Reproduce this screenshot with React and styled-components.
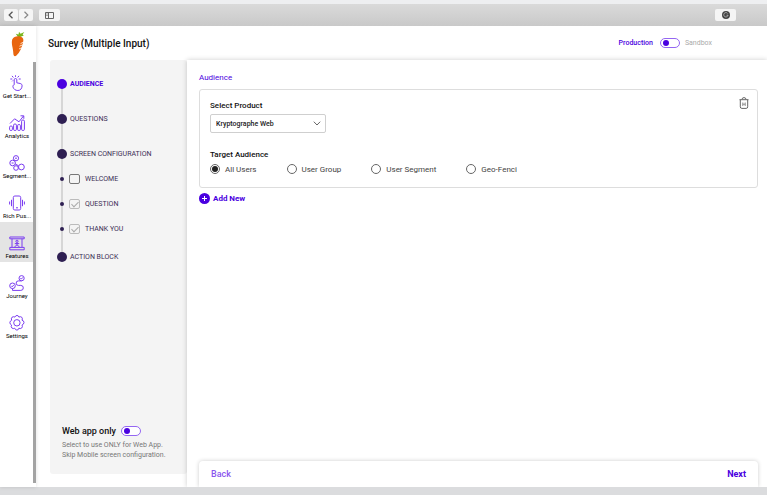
import React, { useState } from "react";
import styled, { createGlobalStyle } from "styled-components";

const steps = [
  { name: "AUDIENCE", active: true },
  { name: "QUESTIONS" },
  {
    name: "SCREEN CONFIGURATION",
    screens: [
      { name: "WELCOME", checked: false },
      { name: "QUESTION", checked: true },
      { name: "THANK YOU", checked: true },
    ],
  },
  { name: "ACTION BLOCK" },
];

const audiences = ["All Users", "User Group", "User Segment", "Geo-Fenci"];

const TapIcon = () => (
  <>
    <path d="M5.200 9.800V4.800a1.300 1.300 0 0 1 2.600 0v3l3.400.7c1.400.3 2 1.200 1.900 2.400-.2 2.700-1.700 4.600-4.200 4.600-2.600 0-4.200-1.400-4.900-3.400-.3-1.200.1-2 1.200-2.300z" />
    <path d="M6.500.3v1.600M3 .900l1.400 1.600M10 .900L8.600 2.500M1.300 4h2M9.700 4h2M3.200 6.300l.9-.9" />
  </>
);

const ChartIcon = () => (
  <>
    <rect x="0.600" y="11" width="2.800" height="4.500" rx="1.200" />
    <rect x="4.600" y="9" width="2.800" height="6.500" rx="1.200" />
    <rect x="8.600" y="9.500" width="2.800" height="6" rx="1.200" />
    <rect x="12.600" y="5" width="2.800" height="10.500" rx="1.200" />
    <path d="M1 8.500l4.600-4.700 4.400 3L14.500 1M11.500.800h3.300v3" />
  </>
);

const SegmentIcon = () => (
  <>
    <circle cx="7" cy="3.200" r="2.600" />
    <circle cx="3.600" cy="8" r="2.800" />
    <circle cx="7" cy="13" r="2.300" />
    <circle cx="12.400" cy="12" r="2.900" />
    <path d="M6 3.200h2M2.600 8h2M6.300 9l3.300 1.800" />
  </>
);

const PhoneIcon = () => (
  <>
    <rect x="4.300" y="1" width="7.400" height="14" rx="1.500" />
    <path d="M7 12.800h2M2.500 4.800v6.400M.6 6.500v3M13.500 4.800v6.400M15.400 6.500v3" />
  </>
);

const FeaturesIcon = () => (
  <>
    <path d="M.8 2h14.400v1.800H.8zM3 3.800v8.400M13 3.800v8.400M.8 12.400h14.400v2.400H.8z" />
    <circle cx="8" cy="6.300" r="1.100" />
    <path d="M8 7.400v2.400M5.400 12L8 9.800l2.600 2.200M5.800 8.600h4.400" />
  </>
);

const JourneyIcon = () => (
  <>
    <circle cx="3.500" cy="10.800" r="2.800" />
    <path d="M2.200 10.800l1 1 1.600-1.900M3.500 13.600v1.800h8.300a2.500 2.500 0 0 0 0-5H9.400a2.200 2.200 0 0 1 0-4.500h3.200" />
    <circle cx="12.600" cy="3.200" r="2.600" />
    <path d="M11.400 3.200l.9.900 1.600-1.700" />
  </>
);

const GearIcon = () => (
  <>
    <path d="M6.600 1Q8-.2 9.400 1l.5 1.100 1.500-.4q1.900.2 2 2.100l-.4 1.400 1.400.7q1.200 1.600 0 3.200l-1.400 1 .4 1.400q-.2 1.900-2.100 2.100l-1.400-.4-.7 1.400q-1.300 1-2.600 0l-.9-1.400-1.400.4q-1.900-.2-2.100-2.100l.4-1.400-1.200-.9q-1.100-1.500 0-3.100l1.300-.9-.4-1.400q.2-1.900 2.100-2.100l1.400.4z" />
    <circle cx="7.900" cy="7.800" r="3.200" />
  </>
);

const menu = [
  { name: "Get Start...", icon: TapIcon },
  { name: "Analytics", icon: ChartIcon },
  { name: "Segment...", icon: SegmentIcon },
  { name: "Rich Pus...", icon: PhoneIcon },
  { name: "Features", icon: FeaturesIcon, active: true },
  { name: "Journey", icon: JourneyIcon },
  { name: "Settings", icon: GearIcon },
];

const Logo = () => (
  <svg width="14" height="26" viewBox="0 0 14 26" role="img" aria-label="Home">
    <path d="M7 6L4.800 2.800l2.700.7L8 .8l1.500 1.900L13.400 1l-1.800 2.500 1.200 1L9 6z" fill="#79b51c" />
    <path d="M1.200 8.500C2.500 5.200 6 5 8 5.300c3.800.4 5.200 2.600 4 6.500C10.800 16.500 9 21.500 5.200 24.800c-2 1-2.900-.4-2.900-2.800 0-4.800-2.300-9-1.100-13.500z" fill="#e8650f" />
    <path d="M12.600 11L9.500 12.700M11.700 13.800L8.500 15.200M10.600 16.800L8 18" stroke="#fff" strokeWidth="0.800" />
  </svg>
);

export default function App() {
  const [audience, setAudience] = useState("All Users");

  return (
    <Window>
      <GlobalStyle />
      <BrowserBar>
        <ButtonGroup>
          <BarButton aria-label="Previous page">
            <svg width="6" height="8" viewBox="0 0 6 8" fill="none" stroke="#555">
              <path d="M4.500.8L1.200 4l3.300 3.200" strokeWidth="1.300" />
            </svg>
          </BarButton>
          <BarButton aria-label="Next page">
            <svg width="6" height="8" viewBox="0 0 6 8" fill="none" stroke="#888">
              <path d="M1.500.8L4.800 4 1.500 7.200" strokeWidth="1.200" />
            </svg>
          </BarButton>
        </ButtonGroup>
        <BarButton $wide aria-label="Show tabs">
          <svg width="9" height="7" viewBox="0 0 9 7" fill="none" stroke="#666">
            <path d="M.5.5h8v6h-8zM3.500.5v6M1.500 2h1M1.500 3.500h1" />
          </svg>
        </BarButton>
        <BarButton $wide $last aria-label="Extension">
          <svg width="8" height="8" viewBox="0 0 8 8">
            <circle cx="4" cy="4" r="4" fill="#444" />
            <path d="M5.800 2.600A2.200 2.200 0 1 0 6.100 4.200H4.500" fill="none" stroke="#bbb" strokeWidth="0.800" />
          </svg>
        </BarButton>
      </BrowserBar>

      <Body>
        <Sidebar>
          <LogoBox>
            <Logo />
          </LogoBox>
          <Menu>
            {menu.map(({ name, icon: Icon, active }) => (
              <MenuLink href="#" key={name} $active={active}>
                <svg width="16" height="16" viewBox="0 0 16 16">
                  <Icon />
                </svg>
                <span>{name}</span>
              </MenuLink>
            ))}
          </Menu>
        </Sidebar>

        <Page>
          <Header>
            <h1>Survey (Multiple Input)</h1>
            <Environment>
              <label htmlFor="environment">Production</label>
              <Toggle id="environment" />
              <span>Sandbox</span>
            </Environment>
          </Header>

          <Columns>
            <StepsPanel>
              <StepList>
                {steps.map((step) => (
                  <li key={step.name}>
                    <Step $active={step.active}>{step.name}</Step>
                    {step.screens && (
                      <ScreenList>
                        {step.screens.map((screen) => (
                          <li key={screen.name}>
                            <Screen>
                              <CheckBox defaultChecked={screen.checked} />
                              {screen.name}
                            </Screen>
                          </li>
                        ))}
                      </ScreenList>
                    )}
                  </li>
                ))}
              </StepList>

              <WebOnly>
                <div>
                  <label htmlFor="webOnly">Web app only</label>
                  <Toggle id="webOnly" />
                </div>
                <p>Select to use ONLY for Web App.</p>
                <p>Skip Mobile screen configuration.</p>
              </WebOnly>
            </StepsPanel>

            <Editor>
              <SectionTitle>Audience</SectionTitle>
              <Card>
                <Fields>
                  <Label htmlFor="product">Select Product</Label>
                  <SelectBox>
                    <select id="product">
                      <option>Kryptographe Web</option>
                    </select>
                    <svg width="8" height="5" viewBox="0 0 8 5" fill="none" stroke="#666">
                      <path d="M.8.7L4 4 7.200.7" />
                    </svg>
                  </SelectBox>
                  <RadioGroup>
                    <legend>Target Audience</legend>
                    <div>
                      {audiences.map((name) => (
                        <RadioLabel key={name}>
                          <Radio
                            name="audience"
                            checked={audience === name}
                            onChange={() => setAudience(name)}
                          />
                          {name}
                        </RadioLabel>
                      ))}
                    </div>
                  </RadioGroup>
                </Fields>
                <IconButton aria-label="Delete">
                  <svg width="10" height="12" viewBox="0 0 10 12" fill="none" stroke="#666">
                    <path d="M.5 2.700h9M3 2.500q0-1.900 2-1.900t2 1.900M1.300 2.800v7q0 1.600 1.600 1.600h4.200q1.600 0 1.600-1.600v-7" />
                    <path d="M3.800 5.500v3.500M6.200 5.500v3.500M3.800 7.200h2.400" strokeWidth="0.700" />
                  </svg>
                </IconButton>
              </Card>
              <AddButton>
                <svg width="11" height="11" viewBox="0 0 11 11">
                  <circle cx="5.500" cy="5.500" r="5.500" fill="#4a00e0" />
                  <path d="M5.500 3v5M3 5.500h5" stroke="#fff" />
                </svg>
                Add New
              </AddButton>

              <Footer>
                <FooterButton>Back</FooterButton>
                <FooterButton $primary>Next</FooterButton>
              </Footer>
            </Editor>
          </Columns>
        </Page>
      </Body>
    </Window>
  );
}

const GlobalStyle = createGlobalStyle`
  * {
    box-sizing: border-box;
  }
  body, h1, h2, p, ol, fieldset {
    margin: 0;
    padding: 0;
  }
  body {
    font-family: Roboto, sans-serif;
    font-size: 8px;
    color: #111111;
  }
  ol {
    list-style: none;
  }
  svg {
    display: block;
    flex: none;
  }
  button, select, input {
    font-family: inherit;
    margin: 0;
  }
  button {
    border: 0;
    padding: 0;
    background: none;
    cursor: pointer;
  }
`;

const Window = styled.div`
  display: flex;
  flex-direction: column;
  min-height: 100vh;
  background: #ffffff;
  border-top: 4px solid #eeeff1;
  border-bottom: 8px solid #dbdcde;
`;

const BrowserBar = styled.div`
  display: flex;
  align-items: center;
  gap: 6px;
  height: 22px;
  padding: 0 31px 0 4px;
  background: linear-gradient(#dadada, #c9c9c9);
`;

const ButtonGroup = styled.div`
  display: flex;
  gap: 1px;
`;

const BarButton = styled.button`
  display: flex;
  align-items: center;
  justify-content: center;
  width: ${(props) => (props.$wide ? "21px" : "14px")};
  height: 12px;
  margin-left: ${(props) => (props.$last ? "auto" : "0")};
  border-radius: 2px;
  background: #f5f5f5;
`;

const Body = styled.div`
  display: flex;
  flex: 1;
`;

const Sidebar = styled.nav`
  display: flex;
  flex-direction: column;
  width: 36px;
  flex: none;
  padding-bottom: 4px;
  box-shadow: 0 0 4px #00000022;
`;

const LogoBox = styled.div`
  display: flex;
  align-items: center;
  justify-content: center;
  height: 36px;
`;

const Menu = styled.div`
  flex: 1;
  border-right: 3px solid #a3a3a3;
`;

const MenuLink = styled.a`
  display: flex;
  flex-direction: column;
  align-items: center;
  justify-content: flex-end;
  height: 40px;
  padding: 0 0 2px 1px;
  background: ${(props) => (props.$active ? "#e4e4e4" : "none")};
  color: #000000;
  font-size: 6px;
  line-height: 9px;
  white-space: nowrap;
  text-decoration: none;

  svg {
    fill: none;
    stroke: #7a3cf0;
    stroke-width: 1;
    stroke-linejoin: round;
  }
`;

const Page = styled.main`
  display: flex;
  flex-direction: column;
  flex: 1;
  min-width: 0;
`;

const Header = styled.header`
  display: flex;
  align-items: center;
  justify-content: space-between;
  height: 34px;
  padding: 0 55px 0 12px;

  h1 {
    font-size: 10px;
    font-weight: 500;
  }
`;

const Environment = styled.div`
  display: flex;
  align-items: center;
  font-size: 7px;

  label {
    color: #4a00e0;
    font-weight: 500;
  }
  input {
    margin: 0 5px 0 7px;
  }
  span {
    color: #aaaaaa;
  }
`;

const Toggle = styled.input.attrs({ type: "checkbox", role: "switch" })`
  appearance: none;
  display: flex;
  align-items: center;
  width: 20px;
  height: 10px;
  padding: 0 2px;
  border: 1px solid #9466f2;
  border-radius: 5px;
  background: #ffffff;
  cursor: pointer;

  &::before {
    content: "";
    width: 6px;
    height: 6px;
    border-radius: 50%;
    background: #4a00e0;
  }
  &:checked {
    justify-content: flex-end;
  }
`;

const Columns = styled.div`
  display: flex;
  flex: 1;
  padding-left: 14px;
`;

const StepsPanel = styled.aside`
  display: flex;
  flex-direction: column;
  justify-content: space-between;
  width: 137px;
  flex: none;
  margin-bottom: 13px;
  padding: 10px 7px 14px;
  border-radius: 3px;
  background: #f4f4f4;
`;

const StepList = styled.ol`
  position: relative;
  display: flex;
  flex-direction: column;
  gap: 7px;
  font-size: 7px;

  /* line that joins the dots */
  &::before {
    content: "";
    position: absolute;
    top: 14px;
    bottom: 14px;
    left: 4px;
    width: 2px;
    background: #d6d6d6;
  }
`;

const Step = styled.div`
  position: relative;
  display: flex;
  align-items: center;
  gap: 3px;
  height: 28px;
  color: ${(props) => (props.$active ? "#4a00e0" : "#3b2e55")};
  font-weight: ${(props) => (props.$active ? 700 : 400)};
  white-space: nowrap;

  &::before {
    content: "";
    width: 10px;
    height: 10px;
    border-radius: 50%;
    background: ${(props) => (props.$active ? "#4a00e0" : "#2e1f52")};
  }
`;

const ScreenList = styled.ol`
  display: grid;
  gap: 10px;
  margin-top: 3px;
`;

const Screen = styled.label`
  position: relative;
  display: flex;
  align-items: center;
  gap: 5px;
  height: 15px;
  padding-left: 3px;
  color: #3b2e55;

  &::before {
    content: "";
    width: 4px;
    height: 4px;
    border-radius: 50%;
    background: #2e1f52;
  }
`;

const CheckBox = styled.input.attrs({ type: "checkbox" })`
  appearance: none;
  display: flex;
  justify-content: center;
  width: 11px;
  height: 10px;
  border: 1px solid #777777;
  border-radius: 2px;

  &:checked {
    border-color: #bbbbbb;
  }
  &:checked::before {
    content: "";
    width: 3px;
    height: 6px;
    border: solid #aaaaaa;
    border-width: 0 1px 1px 0;
    transform: rotate(45deg);
  }
`;

const WebOnly = styled.div`
  padding-left: 5px;
  color: #777777;
  font-size: 7px;
  line-height: 10px;
  white-space: nowrap;

  div {
    display: flex;
    align-items: center;
    gap: 5px;
    margin-bottom: 4px;
  }
  label {
    color: #111111;
    font-size: 9px;
    font-weight: 500;
  }
`;

const Editor = styled.section`
  display: flex;
  flex-direction: column;
  align-items: flex-start;
  flex: 1;
  min-width: 0;
  padding: 11px 9px 0 12px;
  background: #ffffff;
  box-shadow: 0 0 5px #00000033;
  clip-path: inset(-6px 0 0 -6px);
`;

const SectionTitle = styled.h2`
  margin-bottom: 5px;
  color: #4a00e0;
  font-size: 8px;
  font-weight: 400;
  line-height: 13px;
`;

const Card = styled.div`
  display: flex;
  align-items: flex-start;
  justify-content: space-between;
  width: 100%;
  padding: 7px 8px 12px 10px;
  border: 1px solid #dddddd;
  border-radius: 3px;
`;

const Fields = styled.div`
  display: flex;
  flex-direction: column;
  align-items: flex-start;
`;

const Label = styled.label`
  margin: 3px 0;
  font-weight: 500;
  line-height: 11px;
`;

const SelectBox = styled.div`
  display: grid;
  align-items: center;
  width: 116px;
  margin-bottom: 16px;

  select, svg {
    grid-area: 1 / 1;
  }
  select {
    appearance: none;
    width: 100%;
    height: 19px;
    padding: 0 5px;
    border: 1px solid #cfcfcf;
    border-radius: 2px;
    background: #ffffff;
    color: #222222;
    font-size: 7px;
    font-weight: 500;
  }
  svg {
    justify-self: end;
    margin-right: 5px;
    pointer-events: none;
  }
`;

const RadioGroup = styled.fieldset`
  border: 0;

  legend {
    padding: 0;
    font-weight: 500;
    line-height: 11px;
    margin-bottom: 3px;
  }
  div {
    display: flex;
    flex-wrap: wrap;
    gap: 30px;
  }
`;

const RadioLabel = styled.label`
  display: flex;
  align-items: center;
  gap: 5px;
  height: 12px;
  color: #444444;
`;

const Radio = styled.input.attrs({ type: "radio" })`
  appearance: none;
  display: grid;
  place-items: center;
  width: 10px;
  height: 10px;
  border: 1px solid #666666;
  border-radius: 50%;

  &:checked::before {
    content: "";
    width: 6px;
    height: 6px;
    border-radius: 50%;
    background: #222222;
  }
`;

const IconButton = styled.button`
  display: flex;
`;

const AddButton = styled.button`
  display: flex;
  align-items: center;
  gap: 3px;
  margin-top: 5px;
  color: #4a00e0;
  font-size: 8px;
  font-weight: 700;
`;

const Footer = styled.footer`
  display: flex;
  align-items: center;
  justify-content: space-between;
  width: 100%;
  height: 26px;
  margin-top: auto;
  padding: 0 12px;
  border-radius: 4px 4px 0 0;
  background: #ffffff;
  box-shadow: 0 0 4px #00000033;
`;

const FooterButton = styled.button`
  color: ${(props) => (props.$primary ? "#4a00e0" : "#8a55ee")};
  font-size: 9px;
  font-weight: ${(props) => (props.$primary ? 700 : 500)};
`;
